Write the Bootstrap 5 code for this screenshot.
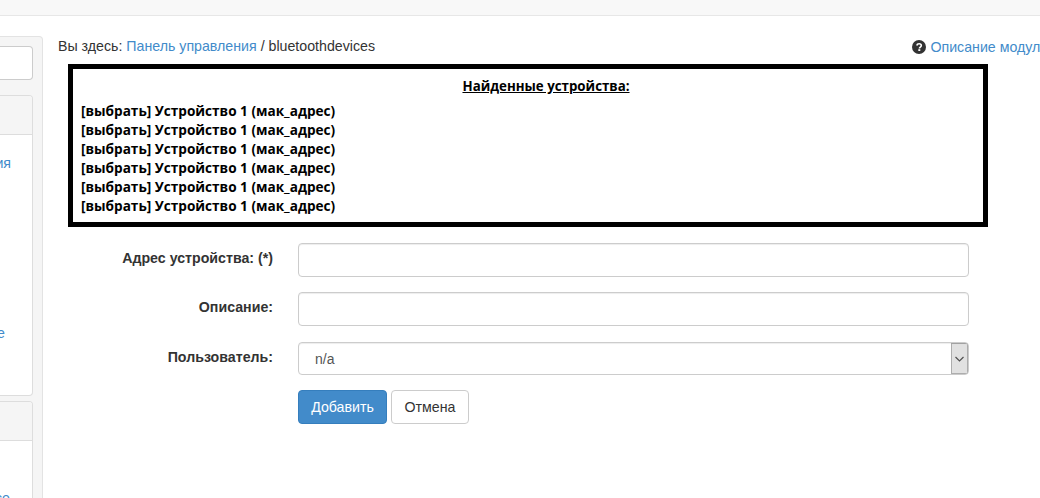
<!DOCTYPE html>
<html lang="ru">
<head>
<meta charset="utf-8">
<title>bluetoothdevices</title>
<link rel="stylesheet" href="https://cdn.jsdelivr.net/npm/bootstrap@5.3.0/dist/css/bootstrap.min.css">
<style>
html,body{height:498px;overflow:hidden}
body{font-family:"Liberation Sans",Arial,sans-serif;font-size:14.2px;line-height:20px;color:#333;background:#fff}
a{color:#428bca;text-decoration:none}
.topstrip{height:16px;background:#f8f8f8;border-bottom:1px solid #e7e7e7}
.pagewrap{width:1100px}
.sidewell{width:43px;height:480px;margin-top:20px;background:#f5f5f5;border:1px solid #e3e3e3;border-left:0;border-top-right-radius:4px;overflow:hidden;flex-shrink:0;padding-top:9px}
.sideinner{width:33px}
.sidesearch{height:34px;background:#fff;border:1px solid #ccc;border-left:0;border-radius:0 4px 4px 0;margin-bottom:15px}
.sidepanel{background:#fff;border:1px solid #ddd;border-left:0;border-radius:0 4px 4px 0;margin-bottom:5px;overflow:hidden}
.sidehead{height:39px;background:#f5f5f5;border-bottom:1px solid #ddd}
.sidebody{white-space:nowrap;display:flex;flex-direction:column;align-items:flex-end}
.sidebody a{display:block;line-height:20px}
.panel-a{height:260px;padding-top:18px}
.panel-b{height:110px;padding-top:47px}
.tail-1{margin-right:21px}
.tail-2{margin-right:27px;margin-top:150px}
.tail-3{margin-right:22px}
.mainzone{width:990px;margin-left:15px;flex-shrink:0;padding-top:20px}
.crumbrow{height:20px}
.helplink{white-space:nowrap;margin-top:1px}
.helpicon{width:14px;height:14px;vertical-align:-2px;margin-right:4px}
.devbox{width:920px;height:163px;margin:8px 0 16px 10px;border:5px solid #000;color:#000;font-family:"Open Sans","Noto Sans",sans-serif;font-weight:700;font-size:13.6px;line-height:19px;padding:8px 8px 0}
.devtitle{text-align:center;text-decoration:underline;margin-bottom:5px;font-size:13.3px;padding-left:36px}
.fieldrow{display:flex;align-items:center;margin-bottom:15px}
.fieldlabel{width:215px;text-align:right;font-weight:700;margin:-4px 25px 0 0}
.fieldinput.form-control,.fieldinput.form-select{width:671px;height:34px;border:1px solid #ccc;border-radius:4px;font-size:14px;line-height:20px;color:#555;padding:6px 12px;box-shadow:inset 0 1px 1px rgba(0,0,0,.075)}
.fieldinput.form-select{height:33px;padding:6px 16px;background-position:right 0 center;background-size:17px 31px;background-image:url("data:image/svg+xml,%3Csvg xmlns='http://www.w3.org/2000/svg' viewBox='0 0 17 31'%3E%3Crect x='.5' y='.5' width='16' height='30' fill='%23e1e1e1' stroke='%23adadad'/%3E%3Cpath d='M4.5 14l4 4 4-4' fill='none' stroke='%23505050' stroke-width='1.2'/%3E%3C/svg%3E")}
.fieldrow.selectrow{margin-top:16px}
.btnrow{padding-left:240px;gap:4px}
.btn-add.btn{background:#428bca;border:1px solid #357ebd;color:#fff;font-size:14.2px;line-height:20px;padding:6px 12px;width:89px;height:34px;border-radius:4px}
.btn-cancel.btn{background:#fff;border:1px solid #ccc;color:#333;font-size:14.2px;line-height:20px;padding:6px 12px;width:78px;height:34px;border-radius:4px}
</style>
</head>
<body>
<div class="topstrip"></div>
<div class="pagewrap d-flex">
  <aside class="sidewell">
    <div class="sideinner">
      <div class="sidesearch"></div>
      <div class="sidepanel">
        <div class="sidehead"></div>
        <div class="sidebody panel-a">
          <a href="#" class="tail-1">Конфигурация</a>
          <a href="#" class="tail-2">Устройство мое</a>
        </div>
      </div>
      <div class="sidepanel">
        <div class="sidehead"></div>
        <div class="sidebody panel-b">
          <a href="#" class="tail-3">Настройки все</a>
        </div>
      </div>
    </div>
  </aside>
  <main class="mainzone">
    <div class="crumbrow d-flex justify-content-between">
      <div>Вы здесь: <a href="#">Панель управления</a> / bluetoothdevices</div>
      <div class="helplink">
        <svg class="helpicon" viewBox="0 0 14 14" aria-hidden="true"><circle cx="7" cy="7" r="7" fill="#333"/><path d="M4.8 5.5C5 4.3 5.9 3.7 7.1 3.7c1.3 0 2.2.8 2.2 1.8 0 1.6-1.9 1.5-1.9 2.9" fill="none" stroke="#fff" stroke-width="1.6"/><rect x="6.3" y="9.2" width="2" height="1.8" fill="#fff"/></svg><a href="#">Описание модуля</a>
      </div>
    </div>
    <div class="devbox">
      <div class="devtitle">Найденные устройства:</div>
      <div>[выбрать] Устройство 1 (мак_адрес)</div>
      <div>[выбрать] Устройство 1 (мак_адрес)</div>
      <div>[выбрать] Устройство 1 (мак_адрес)</div>
      <div>[выбрать] Устройство 1 (мак_адрес)</div>
      <div>[выбрать] Устройство 1 (мак_адрес)</div>
      <div>[выбрать] Устройство 1 (мак_адрес)</div>
    </div>
    <form>
      <div class="fieldrow">
        <label class="fieldlabel" for="f1">Адрес устройства: (*)</label>
        <input id="f1" class="form-control fieldinput" type="text">
      </div>
      <div class="fieldrow">
        <label class="fieldlabel" for="f2">Описание:</label>
        <input id="f2" class="form-control fieldinput" type="text">
      </div>
      <div class="fieldrow selectrow">
        <label class="fieldlabel" for="f3">Пользователь:</label>
        <select id="f3" class="form-select fieldinput"><option>n/a</option></select>
      </div>
      <div class="d-flex btnrow">
        <button type="button" class="btn btn-add">Добавить</button>
        <button type="button" class="btn btn-cancel">Отмена</button>
      </div>
    </form>
  </main>
</div>
<script src="https://cdn.jsdelivr.net/npm/bootstrap@5.3.0/dist/js/bootstrap.bundle.min.js"></script>
</body>
</html>
